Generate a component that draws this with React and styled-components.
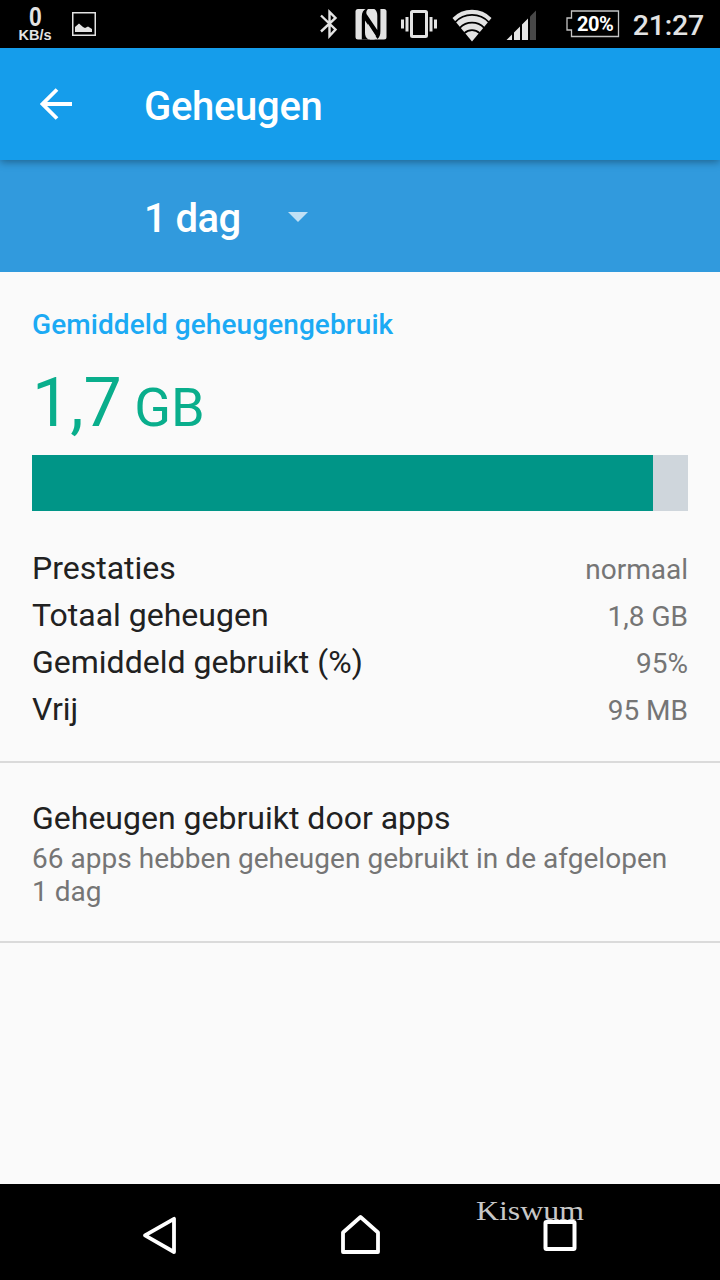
import React from 'react'
import styled, { createGlobalStyle } from 'styled-components'

const STATS = [
  { label: 'Prestaties', value: 'normaal' },
  { label: 'Totaal geheugen', value: '1,8 GB' },
  { label: 'Gemiddeld gebruikt (%)', value: '95%' },
  { label: 'Vrij', value: '95 MB' },
]

const USED_PX = 621

const App = () => (
  <Screen>
    <GlobalStyle />
    <StatusBar />
    <AppBar>
      <BackArrow />
      <Title>Geheugen</Title>
    </AppBar>
    <PeriodBar>
      <Title $tight>1 dag</Title>
      <Caret width="20" height="10" viewBox="0 0 20 10">
        <path d="M0 0H20L10 10Z" fill="#c0e0f5" />
      </Caret>
    </PeriodBar>
    <Content>
      <Summary>
        <Heading>Gemiddeld geheugengebruik</Heading>
        <Amount>
          1,7<Unit>GB</Unit>
        </Amount>
        <Meter>
          <MeterFill style={{ width: USED_PX }} />
        </Meter>
        {STATS.map(({ label, value }) => (
          <Stat key={label}>
            <Label>{label}</Label>
            <Value>{value}</Value>
          </Stat>
        ))}
      </Summary>
      <AppsRow>
        <Label>Geheugen gebruikt door apps</Label>
        <Note>66 apps hebben geheugen gebruikt in de afgelopen 1 dag</Note>
      </AppsRow>
    </Content>
    <NavigationBar />
  </Screen>
)

const StatusBar = () => (
  <Status>
    <Speed>
      <SpeedValue>0</SpeedValue>
      <SpeedUnit>KB/s</SpeedUnit>
    </Speed>
    <StatusIcon $left={20} width="24" height="24" viewBox="0 0 24 24">
      <rect x="0.75" y="0.75" width="22.5" height="22.5" fill="none" stroke="#e3e3e3" strokeWidth="1.5" />
      <path d="M3 20V15L7 11.5L11 15L13 16L16 14.5L20 17V20Z" fill="#e3e3e3" />
    </StatusIcon>
    <Spacer />
    <StatusIcon width="18" height="30" viewBox="0 0 18 30">
      <path
        d="M1 6.5L15.5 20.5L9.5 27V3L15.5 9L1 22.5"
        fill="none"
        stroke="#e3e3e3"
        strokeWidth="2.4"
      />
    </StatusIcon>
    <StatusIcon $left={17} width="32" height="32" viewBox="0 0 32 32">
      <rect x="0.5" y="1" width="31" height="30.5" rx="2.5" fill="#e3e3e3" />
      <path
        d="M11.5 0.5C8.3 2 6.8 4.5 6.8 8.5V31.6H13.5C11 30 10 28 10 24.5V12.5L22.5 31C24.5 29 25.4 27 25.4 23V0.8H19C21.5 2.5 22.3 4.5 22.3 8V22L11.5 6C11 4 11.5 2 13.5 0.5Z"
        fill="#000"
      />
      <path d="M12.8 15.5L20.6 27.5L19.6 31.5H15C13.5 30 12.8 28 12.8 24.5Z" fill="#e3e3e3" />
    </StatusIcon>
    <StatusIcon $left={14} width="36" height="28" viewBox="0 0 36 28">
      <rect x="10.5" y="1.5" width="15" height="25" rx="1" fill="none" stroke="#e3e3e3" strokeWidth="3" />
      <path d="M0 9.5H3V18.5H0ZM4.5 7H7.5V21.5H4.5ZM28.5 7H31.5V21.5H28.5ZM33 9.5H36V18.5H33Z" fill="#e3e3e3" />
    </StatusIcon>
    <StatusIcon $left={15} $top={1} width="40" height="33" viewBox="0 0 40 33">
      <path d="M0.5 9A27 27 0 0 1 39.5 9L20 32.5Z" fill="#e3e3e3" />
      <path
        d="M3 13.3A23.2 23.2 0 0 1 37 13.3M7.8 18.8A17.2 17.2 0 0 1 32.2 18.8M12.5 24A11 11 0 0 1 27.5 24"
        fill="none"
        stroke="#000"
        strokeWidth="1.8"
      />
    </StatusIcon>
    <StatusIcon $left={14} $top={1} width="32" height="30" viewBox="0 0 32 30">
      <path d="M0.5 30L6 24.5V30ZM8 30V22.5L14 16.5V30ZM16 30V14.5L22 8.5V30Z" fill="#e3e3e3" />
      <path d="M24 30V6.5L30 0.5V30Z" fill="#484848" />
    </StatusIcon>
    <Battery>
      <BatteryOutline width="54" height="28" viewBox="0 0 54 28">
        <path
          d="M5.5 1H52.5V26.5H5.5V20H1V8H5.5Z"
          fill="none"
          stroke="#c4c4c4"
          strokeWidth="1.3"
        />
      </BatteryOutline>
      <BatteryText>20%</BatteryText>
    </Battery>
    <Clock>21:27</Clock>
  </Status>
)

const BackArrow = () => (
  <svg width="32" height="32" viewBox="0 0 32 32">
    <path d="M32 16H3M17 1.5L2.5 16L17 30.5" fill="none" stroke="#fff" strokeWidth="3.8" />
  </svg>
)

const NavigationBar = () => (
  <Nav>
    <NavItem>
      <BackIcon width="36" height="40" viewBox="0 0 36 40">
        <path
          d="M33 3.8V37L4 20.4Z"
          fill="none"
          stroke="#fff"
          strokeWidth="3.8"
          strokeLinejoin="round"
        />
      </BackIcon>
    </NavItem>
    <NavItem>
      <svg width="40" height="40" viewBox="0 0 40 40">
        <path
          d="M3 37V17.5L20.5 2L38 17.5V37Z"
          fill="none"
          stroke="#fff"
          strokeWidth="3.8"
          strokeLinejoin="round"
        />
      </svg>
    </NavItem>
    <NavItem>
      <RecentsIcon width="34" height="32" viewBox="0 0 34 32">
        <rect x="2.5" y="2" width="29" height="27" rx="1" fill="none" stroke="#fff" strokeWidth="4" />
      </RecentsIcon>
      <Signature>Kiswum</Signature>
    </NavItem>
  </Nav>
)

const GlobalStyle = createGlobalStyle`
  body {
    margin: 0;
    background: #fafafa;
  }

  * {
    box-sizing: border-box;
  }

  svg {
    display: block;
    flex-shrink: 0;
  }
`

const Screen = styled.div`
  display: flex;
  flex-direction: column;
  width: 720px;
  height: 1280px;
  overflow: hidden;
  background: #fafafa;
  font-family: Roboto, sans-serif;
`

const Status = styled.div`
  display: flex;
  align-items: center;
  height: 48px;
  padding: 0 16px 0 18px;
  background: #000;
  color: #e3e3e3;
`

const Speed = styled.div`
  display: flex;
  flex-direction: column;
  align-items: center;
  width: 34px;
  font-family: 'Liberation Sans', sans-serif;
  font-weight: 700;
`

const SpeedValue = styled.span`
  padding: 1px 0 0 2px;
  font-size: 27px;
  line-height: 20px;
  transform: scaleX(0.85);
`

const SpeedUnit = styled.span`
  margin-top: 1px;
  font-size: 14.5px;
  line-height: 14px;
`

const StatusIcon = styled.svg`
  margin-top: ${({ $top = 0 }) => $top * 2}px;
  margin-left: ${({ $left = 0 }) => $left}px;
`

const Spacer = styled.div`
  flex: 1;
`

const Battery = styled.div`
  position: relative;
  display: flex;
  align-items: center;
  justify-content: center;
  width: 54px;
  height: 28px;
  margin-left: 28px;
  padding-left: 5px;
  color: #fff;
`

const BatteryOutline = styled.svg`
  position: absolute;
  top: 0;
  left: 0;
`

const BatteryText = styled.span`
  font-size: 20px;
  font-weight: 700;
  line-height: 24px;
  letter-spacing: -0.5px;
`

const Clock = styled.span`
  margin-left: 13px;
  padding-top: 3px;
  font-size: 28.5px;
  font-weight: 500;
  line-height: 50px;
  letter-spacing: -0.2px;
`

const AppBar = styled.header`
  z-index: 1;
  display: flex;
  align-items: center;
  gap: 72px;
  height: 112px;
  padding: 0 40px;
  background: #159deb;
  box-shadow: 0 2px 8px rgba(0, 0, 0, 0.36);
`

const PeriodBar = styled.div`
  display: flex;
  align-items: center;
  height: 112px;
  padding-left: 144px;
  background: #319add;
`

const Title = styled.span`
  padding-top: 6px;
  color: #fff;
  font-size: 40px;
  font-weight: 500;
  line-height: 48px;
  letter-spacing: ${({ $tight }) => ($tight ? -0.6 : -0.3)}px;
`

const Caret = styled.svg`
  margin-top: 2px;
  margin-left: 48px;
`

const Content = styled.main`
  flex: 1;
`

const Summary = styled.section`
  height: 491px;
  padding: 36px 32px 0;
  border-bottom: 2px solid #dadada;
`

const Heading = styled.h2`
  margin: 0;
  color: #1caaf4;
  font-size: 28px;
  font-weight: 500;
  line-height: 33px;
  letter-spacing: 0.08px;
`

const Amount = styled.div`
  height: 114px;
  color: #09ae8c;
  font-size: 68px;
  line-height: 125px;
`

const Unit = styled.span`
  margin-left: 12.5px;
  font-size: 54px;
`

const Meter = styled.div`
  height: 56px;
  margin-bottom: 34px;
  background: #cfd6dc;
`

const MeterFill = styled.div`
  height: 100%;
  background: #009587;
`

const Stat = styled.div`
  display: flex;
  align-items: baseline;
  justify-content: space-between;
  height: 47px;
  line-height: 47px;
`

const Label = styled.span`
  color: #212121;
  font-size: 32px;
`

const Value = styled.span`
  color: #757575;
  font-size: 28px;
`

const AppsRow = styled.section`
  height: 180px;
  padding: 36px 32px 0;
  border-bottom: 2px solid #dadada;
  line-height: 38px;
`

const Note = styled.p`
  margin: -1px 0 0;
  color: #757575;
  font-size: 28px;
  line-height: 33px;
  letter-spacing: 0.03px;
`

const Nav = styled.nav`
  display: flex;
  align-items: center;
  justify-content: center;
  height: 96px;
  padding-top: 5px;
  background: #000;
`

const NavItem = styled.div`
  position: relative;
  display: flex;
  align-items: center;
  justify-content: center;
  width: 200px;
`

const BackIcon = styled.svg`
  margin: 0 2px 0 0;
`

const RecentsIcon = styled.svg`
  margin-top: 3px;
`

// Hangs over the top edge of the recents button
const Signature = styled.span`
  position: absolute;
  bottom: 26px;
  left: 15.5px;
  color: #c8c8c8;
  font-family: 'Liberation Serif', serif;
  font-size: 27px;
  line-height: 30px;
  transform: scaleX(1.18);
  transform-origin: left;
`

export default App
